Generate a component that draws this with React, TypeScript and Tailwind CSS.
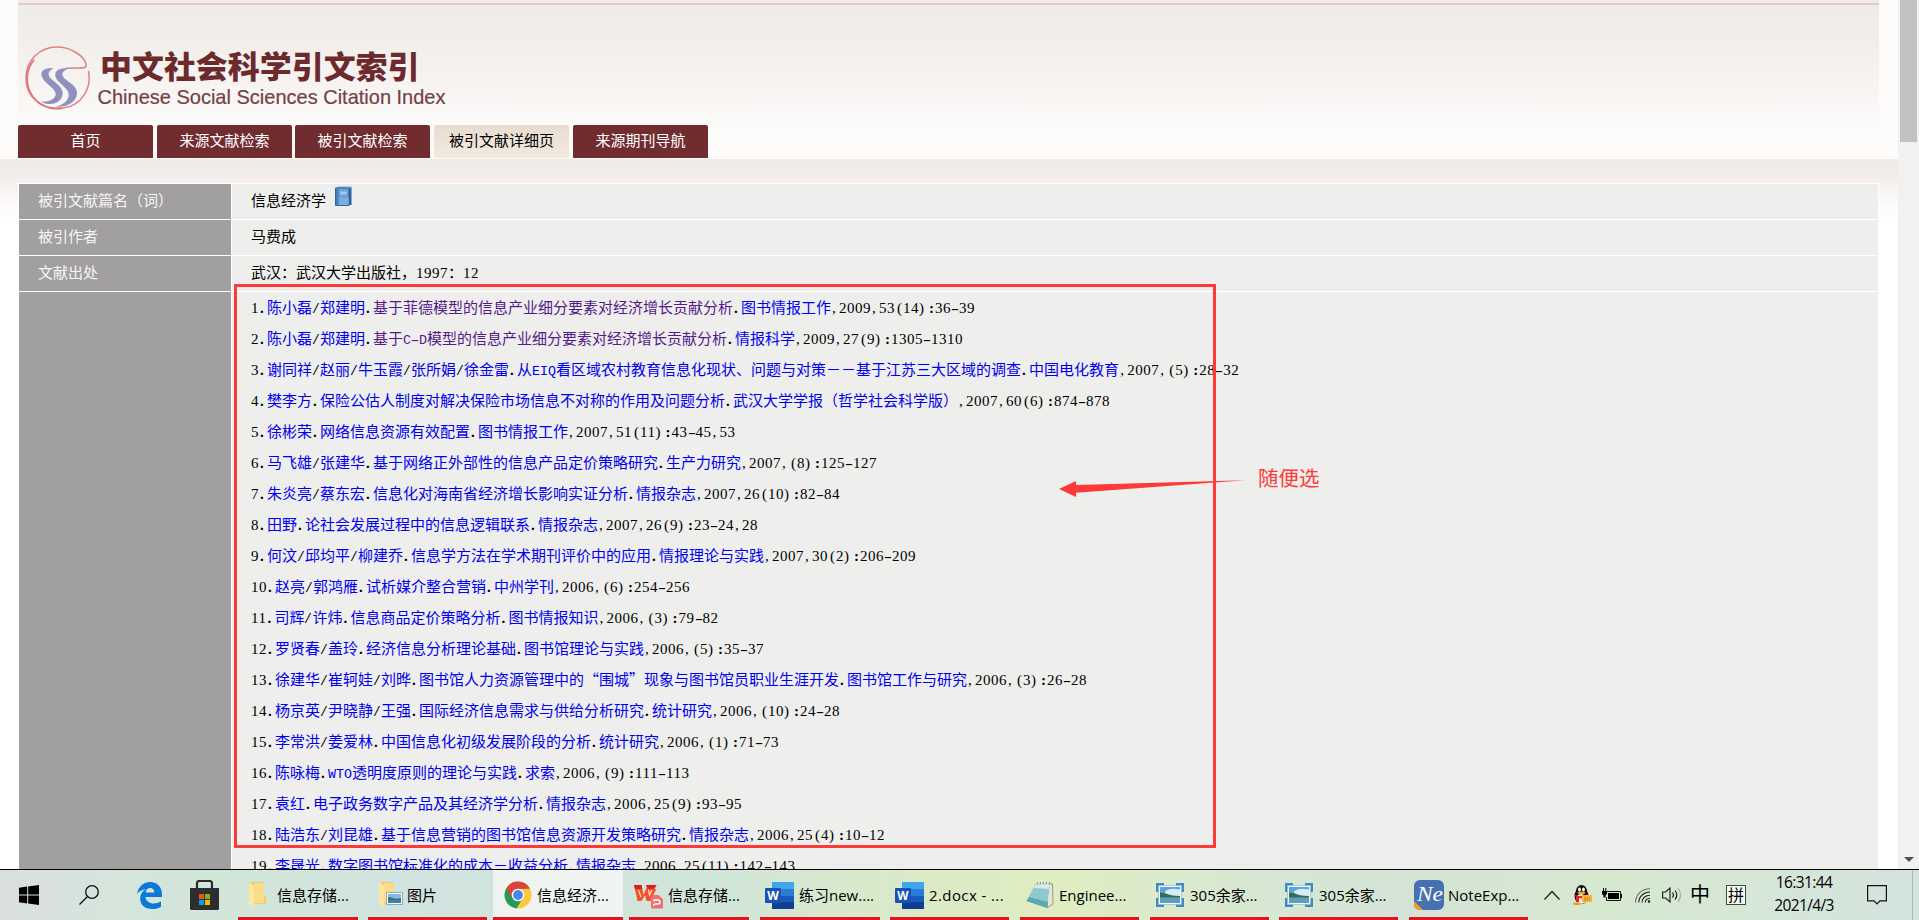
import React from "react";

type Ref = { a: string[]; t: string; j: string; p: string; seen?: boolean };

const refs: Ref[] = [
  { a: ["陈小磊", "郑建明"], t: "基于菲德模型的信息产业细分要素对经济增长贡献分析", j: "图书情报工作", p: ",2009,53(14):36-39", seen: true },
  { a: ["陈小磊", "郑建明"], t: "基于C-D模型的信息产业细分要素对经济增长贡献分析", j: "情报科学", p: ",2009,27(9):1305-1310", seen: true },
  { a: ["谢同祥", "赵丽", "牛玉霞", "张所娟", "徐金雷"], t: "从EIQ看区域农村教育信息化现状、问题与对策－－基于江苏三大区域的调查", j: "中国电化教育", p: ",2007,(5):28-32" },
  { a: ["樊李方"], t: "保险公估人制度对解决保险市场信息不对称的作用及问题分析", j: "武汉大学学报（哲学社会科学版）", p: ",2007,60(6):874-878" },
  { a: ["徐彬荣"], t: "网络信息资源有效配置", j: "图书情报工作", p: ",2007,51(11):43-45,53" },
  { a: ["马飞雄", "张建华"], t: "基于网络正外部性的信息产品定价策略研究", j: "生产力研究", p: ",2007,(8):125-127" },
  { a: ["朱炎亮", "蔡东宏"], t: "信息化对海南省经济增长影响实证分析", j: "情报杂志", p: ",2007,26(10):82-84" },
  { a: ["田野"], t: "论社会发展过程中的信息逻辑联系", j: "情报杂志", p: ",2007,26(9):23-24,28" },
  { a: ["何汶", "邱均平", "柳建乔"], t: "信息学方法在学术期刊评价中的应用", j: "情报理论与实践", p: ",2007,30(2):206-209" },
  { a: ["赵亮", "郭鸿雁"], t: "试析媒介整合营销", j: "中州学刊", p: ",2006,(6):254-256" },
  { a: ["司辉", "许炜"], t: "信息商品定价策略分析", j: "图书情报知识", p: ",2006,(3):79-82" },
  { a: ["罗贤春", "盖玲"], t: "经济信息分析理论基础", j: "图书馆理论与实践", p: ",2006,(5):35-37" },
  { a: ["徐建华", "崔轲娃", "刘晔"], t: "图书馆人力资源管理中的“围城”现象与图书馆员职业生涯开发", j: "图书馆工作与研究", p: ",2006,(3):26-28" },
  { a: ["杨京英", "尹晓静", "王强"], t: "国际经济信息需求与供给分析研究", j: "统计研究", p: ",2006,(10):24-28" },
  { a: ["李常洪", "姜爱林"], t: "中国信息化初级发展阶段的分析", j: "统计研究", p: ",2006,(1):71-73" },
  { a: ["陈咏梅"], t: "WTO透明度原则的理论与实践", j: "求索", p: ",2006,(9):111-113" },
  { a: ["袁红"], t: "电子政务数字产品及其经济学分析", j: "情报杂志", p: ",2006,25(9):93-95" },
  { a: ["陆浩东", "刘昆雄"], t: "基于信息营销的图书馆信息资源开发策略研究", j: "情报杂志", p: ",2006,25(4):10-12" },
  { a: ["李晟光"], t: "数字图书馆标准化的成本－收益分析", j: "情报杂志", p: ",2006,25(11):142-143" },
];

/* Half-width characters sit on an 8px grid, full-width ones on a 15px grid. */
function Half({ s }: { s: string }) {
  const runs = s.match(/[0-9]+|[A-Z]+|[\s\S]/g) ?? [];
  return (
    <>
      {runs.map((r, i) => {
        if (/[0-9]/.test(r)) return <span key={i} className="font-['Liberation_Serif',serif] tracking-[0.5px]">{r}</span>;
        if (/[A-Z]/.test(r)) return <span key={i} className="font-['Liberation_Mono',monospace] text-[13.33px]">{r}</span>;
        if (r === "-") return <span key={i} className="inline-block w-2 origin-center scale-x-160 text-center font-['Liberation_Serif',serif]">{r}</span>;
        if (r === "(") return <span key={i} className="inline-block w-2 pr-px text-right font-['Liberation_Serif',serif]">{r}</span>;
        if (r === ":") return <span key={i} className="inline-block w-2 pr-px text-right font-['Liberation_Serif',serif] font-bold">{r}</span>;
        if (r === "/") return <span key={i} className="inline-block w-2 origin-center scale-x-150 text-center font-['Liberation_Serif',serif]">{r}</span>;
        if (r === ")") return <span key={i} className="inline-block w-2 text-left font-['Liberation_Serif',serif]">{r}</span>;
        if (r === ".") return <span key={i} className="inline-block w-2 pl-px text-left font-['Liberation_Serif',serif] font-bold">{r}</span>;
        return <span key={i} className="inline-block w-2 pl-px text-left font-['Liberation_Serif',serif]">{r}</span>;
      })}
    </>
  );
}

function Mixed({ s }: { s: string }) {
  const runs = s.match(/[\x20-\x7e]+|[“”]|[^\x20-\x7e“”]+/g) ?? [];
  return (
    <>
      {runs.map((r, i) => {
        if (/[“”]/.test(r)) return <span key={i} className={r === "“" ? "inline-block w-[15px] text-right" : "inline-block w-[15px] text-left"}>{r}</span>;
        return /[\x20-\x7e]/.test(r) ? <Half key={i} s={r} /> : <span key={i}>{r}</span>;
      })}
    </>
  );
}

function Logo() {
  return (
    <svg width="440" height="80" viewBox="18 40 440 80" className="block">
      <path d="M88.500 71 C92 88 82 106 62 108.300 C40 110 26 96 26 78 C26 60 40 47 57 47 C71 47 84 56 86 64 C87 68 84 68 79 68 L66 68.300" fill="none" stroke="#e0807f" strokeWidth="1.500" />
      <path d="M34 60 C25 70 25 86 33 97 C40 106 50 110 62 108" fill="none" stroke="#e27474" strokeWidth="1.800" />
      <g fill="#9092bd" transform="translate(0 30) scale(.3333)">
        <path d="M160 114C135 113 121 121 125 138C130 158 163 172 167 190C169 205 150 217 122 215C150 230 186 222 188 190C189 165 150 152 146 135C145 125 153 120 160 114Z" />
        <path d="M206 114C180 113 163 121 166 138C170 158 204 172 206 192C207 212 190 225 164 230C205 234 233 213 231 186C229 162 191 152 187 135C187 125 196 120 206 114Z" />
      </g>
      <text x="100" y="78" textLength="319.500" lengthAdjust="spacingAndGlyphs" className="fill-[#6c2a2c] font-['Noto_Sans_CJK_SC',sans-serif] text-[31px] font-black">中文社会科学引文索引</text>
      <text x="97.500" y="104" textLength="348" lengthAdjust="spacingAndGlyphs" className="fill-[#744245] stroke-[#744245] stroke-[0.2px] font-['Liberation_Sans',sans-serif] text-[21px]">Chinese Social Sciences Citation Index</text>
    </svg>
  );
}

function Book() {
  return (
    <svg width="17" height="20" viewBox="0 0 17 20" className="ml-[9px]">
      <path d="M2 1h14.500v18H2z" fill="#2f5f96" />
      <path d="M1 2 3 .500h13.500v2H3z" fill="#7ea9d2" />
      <path d="M.500 2h13.500v17.500H.500z" fill="#68a3d6" stroke="#33669e" />
      <path d="M1 2.500h2.500v16.500H1z" fill="#4480ba" />
      <path d="M5.500 5.500h6v3h-6z" fill="#a8cdec" />
      <path d="M4.500 12h9v7h-9z" fill="#78b0df" />
    </svg>
  );
}

const tabs = [
  { label: "首页", gap: "mr-1" },
  { label: "来源文献检索", gap: "mr-[3px]" },
  { label: "被引文献检索", gap: "mr-1" },
  { label: "被引文献详细页", gap: "mr-1", on: true },
  { label: "来源期刊导航", gap: "" },
];

function Folder({ pic }: { pic?: boolean }) {
  return (
    <svg width="25" height="28" viewBox="0 0 25 28">
      <path d="M1 1h15v13l2 2v7H4z" fill="#f3cb68" />
      <path d="M6 2h10v20H6z" fill="#f9dc8c" />
      <path d="M1 1 6 5v21L1 23z" fill="#ffe69f" />
      {pic && (
        <g>
          <path d="M8.500 11.500h16v12h-16z" fill="#fff" stroke="#9aa5ad" />
          <path d="M10 13h13v5H10z" fill="#7fb9ec" />
          <path d="M10 16c4 0 6 3 13 1v3H10z" fill="#3f7a52" />
          <path d="M10 19h13v3H10z" fill="#3b7fb5" />
        </g>
      )}
    </svg>
  );
}

function Chrome() {
  return (
    <svg width="28" height="28" viewBox="0 0 28 28">
      <circle cx="14" cy="14" r="13.500" fill="#fbc93b" />
      <path d="M14 14 2.300 7.300A13.500 13.500 0 0 0 12.500 27.400L19 17z" fill="#1f9d58" />
      <path d="M2.300 7.300A13.500 13.500 0 0 1 25.900 7.700L14 8l-6 9z" fill="#d8463a" />
      <circle cx="14" cy="14" r="6.300" fill="#fff" />
      <circle cx="14" cy="14" r="4.900" fill="#4a86ee" />
    </svg>
  );
}

function Wps() {
  return (
    <svg width="30" height="28" viewBox="0 0 30 28">
      <path d="M0 4h7.500l2 10L13 6l-1-2h10.500l-2 3.500 1.500 1L16.500 20h-4l-1.500-6-3.500 6h-4z" fill="#f4502a" />
      <path d="M0 4h7.500l.8 4L1 8zM12 4h10.500l-2 3.500-7 .5z" fill="#d8201c" />
      <path d="M4.500 9 7 16M14.500 8.500 15.500 14l2.500-5" fill="none" stroke="#ffe0d4" strokeWidth="1.200" />
      <path d="M18.500 14h6l4.500 4v8q0 1.500-1.500 1.500h-9q-1.500 0-1.500-1.500V15.500q0-1.500 1.500-1.500z" fill="#f0706f" />
      <path d="M20 20.500v-1.500h4q2 0 2 2t-2 2h-3q-1.500 0-1.500 2" fill="none" stroke="#fff" strokeWidth="1.300" />
    </svg>
  );
}

function Word() {
  return (
    <svg width="29" height="27" viewBox="0 0 29 27">
      <path d="M7 0h22v7H7z" fill="#41a5ee" />
      <path d="M7 7h22v7H7z" fill="#2b7cd3" />
      <path d="M7 14h22v6H7z" fill="#185abd" />
      <path d="M7 20h22v7H7z" fill="#103f91" />
      <rect y="6" width="16" height="15" rx="1" fill="#1753b3" />
      <text x="2.200" y="17.800" textLength="11.600" lengthAdjust="spacingAndGlyphs" className="fill-white font-['Open_Sans',sans-serif] text-[12px] font-bold">W</text>
    </svg>
  );
}

function Notepad() {
  return (
    <svg width="28" height="28" viewBox="0 0 28 28">
      <path d="M22 3h4.500l.5 20-6 4z" fill="#e9e3d0" stroke="#8c8468" strokeWidth=".8" />
      <path d="M10 2h14l-3 25L.5 20z" fill="#8fc9cf" />
      <path d="M10 2h14l-1 6L8 7z" fill="#d4ebe9" />
      <path d="M.5 20 3 16l19 5-1 6z" fill="#5ba7b3" />
      <path d="M11 3.500l.7-2.500M14 3.500l.7-2.500M17 3.500l.7-2.500M20 3.500l.7-2.500M23 3.500l.7-2.500" stroke="#868686" />
    </svg>
  );
}

function Photo() {
  return (
    <svg width="28" height="24" viewBox="0 0 28 24">
      <path d="M0 0h8v5H4v4H0zM28 0h-8v5h4v4h4zM0 24h8v-5H4v-4H0zM28 24h-8v-5h4v-4h4z" fill="#3d8bcb" />
      <path d="M2.500 2.500h23v19h-23z" fill="#f4f8fa" stroke="#9fb4bf" strokeWidth=".7" />
      <path d="M4 4h20v8H4z" fill="#5ba3e6" />
      <path d="M9 8.500c4-3.500 9-3 15-2v6H9z" fill="#d5ecf8" />
      <path d="M4 9.500c6 0 9 3.500 20 3.500v2H4z" fill="#356f52" />
      <path d="M4 14.500h20V20H4z" fill="#5c9fbd" />
    </svg>
  );
}

function NoteExpress() {
  return (
    <svg width="30" height="30" viewBox="0 0 30 30">
      <rect width="30" height="30" rx="6" fill="#4570b2" />
      <path d="M0 21 9 30H6a6 6 0 0 1-6-6z" fill="#f59a24" />
      <text x="3" y="21" textLength="26" lengthAdjust="spacingAndGlyphs" className="fill-white font-['Liberation_Serif',serif] text-[22px] italic">Ne</text>
    </svg>
  );
}

const tasks: { icon: React.ReactNode; label: string; box: string; w: string }[] = [
  { icon: <Folder />, label: "信息存储...", box: "w-[120px] mr-[10px] pl-[10px]", w: "w-[29px]" },
  { icon: <Folder pic />, label: "图片", box: "w-[119px] mr-[6px] pl-[10px]", w: "w-[29px]" },
  { icon: <Chrome />, label: "信息经济...", box: "w-[130px] mr-[6px] pl-[11px] bg-[#eff4f2]", w: "w-[33px]" },
  { icon: <Wps />, label: "信息存储...", box: "w-[120px] mr-[11px] pl-[5px]", w: "w-[34px]" },
  { icon: <Word />, label: "练习new....", box: "w-[120px] mr-[10px] pl-[5px]", w: "w-[34px]" },
  { icon: <Word />, label: "2.docx - ...", box: "w-[119px] mr-[11px] pl-[5px] tracking-[0.4px]", w: "w-[34px]" },
  { icon: <Notepad />, label: "Enginee...", box: "w-[119px] mr-[11px] pl-[6px]", w: "w-[33px]" },
  { icon: <Photo />, label: "305余家...", box: "w-[119px] mr-[10px] pl-[6px]", w: "w-[34px]" },
  { icon: <Photo />, label: "305余家...", box: "w-[119px] mr-[11px] pl-[6px]", w: "w-[34px]" },
  { icon: <NoteExpress />, label: "NoteExp...", box: "w-[119px] pl-[5px]", w: "w-[34px]" },
];

function Taskbar() {
  return (
    <footer className="flex h-[51px] w-full shrink-0 border-t border-black bg-[linear-gradient(90deg,#dadfde_0%,#d5e5dc_6%,#d2e6d9_12%,#d1e3df_22%,#d1e3de_30%,#d2e6d8_38%,#daeac8_47%,#dfedc0_55%,#dbebcb_60%,#d6e7d5_67%,#d4e3d5_73%,#d6e9d0_84%,#d5e7d6_91%,#d3e3de_100%)] font-['Open_Sans','Noto_Sans_CJK_SC',sans-serif] text-[15px] text-black">
      <div className="flex w-[238px] items-center">
        <svg width="20" height="20" viewBox="0 0 20 20" className="ml-[19px]">
          <path d="M0 2.700 8.200 1.600V9.500H0zM9.200 1.400 20 0v9.500H9.200zM0 10.500h8.200v7.900L0 17.300zM9.200 10.500H20V20L9.200 18.600z" />
        </svg>
        <svg width="20" height="20" viewBox="0 0 20 20" className="ml-10" fill="none" stroke="#111" strokeWidth="1.300">
          <circle cx="13" cy="7" r="6.300" />
          <path d="M8.500 11.500.5 19.500" />
        </svg>
        <svg width="25" height="27" viewBox="0 0 25 27" className="ml-[38px]">
          <path fill="#0c78d7" d="M0 12C1.500 4 7 0 13 0c7.500 0 12 5.500 12 12v3H8.500c.3 4 4 6.500 8 6.500 2.800 0 5.300-.8 7.500-2.200v5.400C21.800 26.200 18.500 27 15.200 27 8 27 3.200 23 3.200 16.500c0-4.200 2.300-7.500 6-9.200C5 7.500 1.800 9.500 0 12zM8.700 10.500h8.600C17.300 7.500 15.700 6 13.200 6c-2.400 0-4 1.700-4.500 4.500z" />
        </svg>
        <svg width="29" height="30" viewBox="0 0 29 30" className="ml-7">
          <path d="M7 9V3.500Q7 1 9.500 1h10Q22 1 22 3.500V9" fill="none" stroke="#2b2b2b" strokeWidth="2.200" />
          <path d="M0 8h29v20.500q0 1.500-1.500 1.500h-26Q0 30 0 28.500z" fill="#2e2e2e" />
          <path d="M9 14h5v5H9z" fill="#f25022" /><path d="M15 14h5v5h-5z" fill="#7fba00" />
          <path d="M9 20h5v5H9z" fill="#00a4ef" /><path d="M15 20h5v5h-5z" fill="#ffb900" />
        </svg>
      </div>
      {tasks.map((t, i) => (
        <div key={i} className={`flex shrink-0 items-center overflow-hidden border-b-[3px] border-[#e5131d] pt-[3px] whitespace-nowrap ${t.box}`}>
          <span className={`flex shrink-0 ${t.w}`}>{t.icon}</span>
          <span>{t.label}</span>
        </div>
      ))}
      <div className="flex items-center">
        <svg width="16" height="10" viewBox="0 0 16 10" className="ml-4" fill="none" stroke="#222" strokeWidth="1.400"><path d="M.5 9.500 8 1.500l7.500 8" /></svg>
        <svg width="20" height="20" viewBox="0 0 20 20" className="ml-3">
          <ellipse cx="9.500" cy="11" rx="7" ry="8" fill="#111" />
          <ellipse cx="9.500" cy="6" rx="5.500" ry="6" fill="#111" />
          <ellipse cx="9" cy="14" rx="5" ry="5" fill="#eee" />
          <ellipse cx="7.500" cy="4.500" rx="1.400" ry="2" fill="#fff" /><ellipse cx="11.500" cy="4.500" rx="1.400" ry="2" fill="#fff" />
          <ellipse cx="9.500" cy="7.800" rx="4" ry="1.300" fill="#f7a41d" />
          <path d="M2 9.500q7 3.500 14-.5v3Q10 14 7 13v4H4v-5z" fill="#e0222a" />
          <ellipse cx="5" cy="18.800" rx="4" ry="1.200" fill="#f29b1a" />
          <path d="M10 10h10v7h-5l-3 3v-3h-2z" fill="#f8b43a" />
          <path d="M12 13h6M12 15h6" stroke="#a86408" strokeWidth=".8" strokeDasharray="1.500 1" />
        </svg>
        <svg width="20" height="14" viewBox="0 0 20 14" className="ml-2.5">
          <path d="M4.500 3.500H18.500v9H4.500V9" fill="none" stroke="#111" /><path d="M6 5h11v6H6z" /><path d="M19 6h1v4h-1z" />
          <path d="M0 3h5v3l-1.500 1.500v2h-2v-2L0 6zM1 0h1v3H1zM3.300 0h1v3h-1z" />
        </svg>
        <svg width="16" height="15" viewBox="0 0 16 15" className="ml-[13px]" fill="none" stroke="#222" strokeWidth="1.100">
          <path d="M.5 14.500C.5 6.500 7 .7 15 .7" stroke="#666" /><path d="M3.800 14.500C3.800 8.500 8.800 4 15 4M7 14.500C7 10.300 10.500 7.200 15 7.200M10.300 14.500c0-2.300 2-4 4.700-4" /><circle cx="14" cy="13.500" r="1.200" fill="#111" stroke="none" />
        </svg>
        <svg width="20" height="18" viewBox="0 0 20 18" className="ml-[11px]" fill="none" stroke="#222" strokeWidth="1.200">
          <path d="M.6 6h3L8 2v14l-4.400-4h-3z" /><path d="M10.500 6.500q2 2.500 0 5M13 4.500q3.500 4.500 0 9" /><path d="M16 2q5 7 0 14" stroke="#a5aca6" />
        </svg>
        <span className="ml-2 w-[20px] text-[20px] leading-5">中</span>
        <span className="ml-4 flex h-5 w-5 items-center justify-center border border-[#444] bg-[#f6faf5] text-[16px] leading-none">拼</span>
      </div>
      <div className="ml-[22px] flex w-[72px] flex-col items-center pt-px text-[15.500px] leading-[23px] tracking-[-0.6px]">
        <span>16:31:44</span>
        <span>2021/4/3</span>
      </div>
      <svg width="20" height="20" viewBox="0 0 20 20" className="mt-[15px] ml-[27px] shrink-0" fill="none" stroke="#111" strokeWidth="1.200">
        <path d="M.6.6h18.800v15.300h-6.400L10 19l-3-3.100H.6z" />
      </svg>
      <div className="ml-[25px] w-px bg-[#a9b8b0]" />
    </footer>
  );
}

const labelCell = "w-[212px] shrink-0 bg-[#a19fa0] pl-[19px] text-[#f7f5f5]";
const valueCell = "grow bg-[#eeeeec] pl-[19px]";

export default function App() {
  return (
    <div className="relative flex h-[920px] w-full flex-col overflow-hidden bg-white font-['Noto_Sans_CJK_SC',sans-serif] text-[15px] text-black">
      <div className="flex h-[869px] w-full">
        <div className="flex w-[1898px] flex-col overflow-hidden bg-white">
          <header className="h-[159px] shrink-0 bg-[#fcfbf9] pr-[19px] pl-[18px]">
            <div className="h-[125px] border-t-[3px] border-[#f6ebe9] bg-[linear-gradient(#efece7,#f2efea_30%,#f6f2f0_60%,#fcfbfa)]">
              <div className="h-[2px] bg-[#dacfce]" />
              <div className="pt-[35px]"><Logo /></div>
            </div>
            <nav className="flex h-[33px]">
              {tabs.map((t) => (
                <a key={t.label} className={`flex w-[135px] items-center justify-center rounded-t-[2px] pb-0.5 ${t.on ? "bg-[linear-gradient(#e7dccf,#f3eae1)] text-black" : "bg-[#702c2f] text-white"} ${t.gap}`}>{t.label}</a>
              ))}
            </nav>
          </header>
          <main className="grow bg-[linear-gradient(#eeeae6,#f4efed_20px,#fbf9f8_42px,#fff_60px)] pt-[24px] pr-[19px] pl-[18px]">
            <div className="flex h-[700px] flex-col gap-px border border-white bg-white">
              <div className="flex h-[35px] shrink-0 gap-px leading-[31px]">
                <div className={labelCell}>被引文献篇名（词）</div>
                <div className={`${valueCell} flex items-start`}><span>信息经济学</span><span className="pt-0.5"><Book /></span></div>
              </div>
              <div className="flex h-[35px] shrink-0 gap-px leading-[31px]">
                <div className={labelCell}>被引作者</div>
                <div className={valueCell}>马费成</div>
              </div>
              <div className="flex h-[35px] shrink-0 gap-px leading-[31px]">
                <div className={labelCell}>文献出处</div>
                <div className={valueCell}><Mixed s="武汉：武汉大学出版社，1997：12" /></div>
              </div>
              <div className="flex grow gap-px">
                <div className={labelCell} />
                <div className={valueCell}>
                  {refs.map((r, i) => (
                    <div key={i} className="h-[31px] leading-[29px] whitespace-nowrap">
                      <Half s={`${i + 1}.`} />
                      {r.a.map((n, k) => (
                        <React.Fragment key={n}>
                          {k > 0 && <Half s="/" />}
                          <a className="text-[#0000ee]">{n}</a>
                        </React.Fragment>
                      ))}
                      <Half s="." />
                      <a className={r.seen ? "text-[#551a8b]" : "text-[#0000ee]"}><Mixed s={r.t} /></a>
                      <Half s="." />
                      <a className="text-[#0000ee]">{r.j}</a>
                      <Half s={r.p} />
                    </div>
                  ))}
                </div>
              </div>
            </div>
          </main>
        </div>
        <div className="flex w-[21px] flex-col items-center justify-between bg-[#f1f1f1]">
          <div className="mr-px h-[142px] w-[17px] bg-[#c1c1c1]" />
          <svg width="10" height="5" viewBox="0 0 10 5" className="mb-[7px]"><path d="M0 0h10L5 5z" fill="#505050" /></svg>
        </div>
      </div>
      <Taskbar />

      <div className="absolute top-[284px] left-[234px] h-[564px] w-[982px] border-[3px] border-[#fd3a3a]" />
      <svg width="190" height="20" viewBox="0 0 190 20" className="absolute top-[479px] left-[1057px]">
        <path d="M2 10 19 2v4L188 1.200 19 13.800V18z" fill="#fd3a3a" />
      </svg>
      <span className="absolute top-[462px] left-[1258px] text-[20.500px] leading-[30px] text-[#fd3a3a]">随便选</span>
    </div>
  );
}
